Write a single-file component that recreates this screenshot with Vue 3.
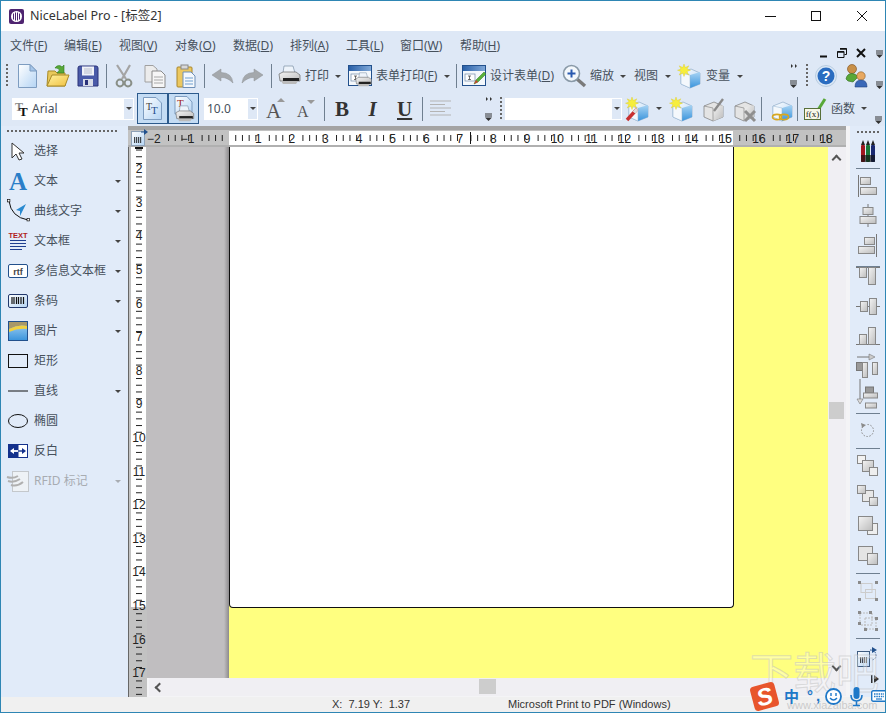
<script setup>
// every row keeps its reference x/y, margins are worked out from those
function flowX(items, start) {
  let pos = start
  return items.map((it) => {
    const ml = it.x - pos
    pos = it.x + it.w
    return { ...it, ml }
  })
}

const cube = `<path d="M3 9L13 5L22 9V20L12 24L3 20Z" fill="url(#gPage)" stroke="#7fa0c0" stroke-width=".6"/><path d="M12 11L22 8V20L12 24Z" fill="url(#gBlue)"/><path d="M3 9L12 11V24L3 20Z" fill="#f4f8fc" stroke="#8fb0d0" stroke-width=".5"/>`
const star = `<path d="M6 0L7.3 3.6L10.8 1.8L9 5L12.5 6.2L9 7.5L10.8 11L7.3 9L6 12.5L4.7 9L1.2 11L3 7.5L-.5 6.2L3 5L1.2 1.8L4.7 3.6Z" fill="#f6ee3c" stroke="#d8c830" stroke-width=".4"/>`
const greyCube = `<path d="M3 9L13 5L22 9V20L12 24L3 20Z" fill="#e4e4e4" stroke="#7a7a7a" stroke-width=".7"/><path d="M12 11L22 8V20L12 24Z" fill="url(#gGrey)"/><path d="M3 9L12 11V24" fill="none" stroke="#8a8a8a" stroke-width=".7"/>`
const formWin = `<rect x=".5" y=".5" width="23" height="20" fill="#f4f8fc" stroke="#22508c"/><rect x="1" y="1" width="22" height="5" fill="url(#gTitle)"/><rect x="3" y="9" width="10" height="7" fill="#fff" stroke="#6f8aa8" stroke-width=".7"/><path d="M6 11H9M7.5 11V14.5M6 14.5H9" stroke="#333" stroke-width=".7" fill="none"/>`
const printerSmall = `<path d="M6 1H15L17 8H5Z" fill="#eef4fb" stroke="#7b8fa5" stroke-width=".7"/><path d="M1 9L5 7H18L22 10V16H2Z" fill="url(#gGrey)" stroke="#666" stroke-width=".7"/><rect x="5" y="13" width="16" height="3" fill="#222"/><path d="M3 16H20L18 19H5Z" fill="#bbb"/>`

const I = {
  new: [20, 24, `<path d="M1.5 .5H13L19.5 7V23.5H1.5Z" fill="url(#gPage)" stroke="#7d9cc0"/><path d="M13 .5V7H19.5Z" fill="#a6c6ea" stroke="#7d9cc0"/>`],
  open: [24, 24, `<path d="M1 22L2 7H9L11 9H19V22Z" fill="#e8c85a" stroke="#a88a28"/><path d="M1 22L6 11H23L19 22Z" fill="url(#gYellow)" stroke="#a88a28"/><path d="M9 4C11 1 14 1 16 3L18 1V9H11L13.5 6C12.5 4.5 11 4 9 4Z" fill="#58a838" stroke="#2f7a20" stroke-width=".6"/>`],
  save: [22, 22, `<path d="M1 3Q1 1 3 1H19Q21 1 21 3V21H1Z" fill="#4a5aa8" stroke="#2a3278"/><rect x="5" y="1.5" width="12" height="9" fill="#f0f2f8"/><path d="M7 4H15M7 6H15M7 8H15" stroke="#b8bccc"/><rect x="6" y="14" width="10" height="7" fill="#d8dce8"/><rect x="8" y="15" width="3" height="5" fill="#2a3278"/>`],
  cut: [18, 24, `<path d="M2 1L11 15M15 1L7 15" stroke="#a4a4a4" stroke-width="2.2" fill="none"/><circle cx="5" cy="19" r="3.4" fill="none" stroke="#8a9088" stroke-width="2"/><circle cx="13" cy="19" r="3.4" fill="none" stroke="#8a9088" stroke-width="2"/>`],
  copy: [22, 23, `<path d="M1 .5H9L13 4V17H1Z" fill="#ececec" stroke="#a0a0a0"/><path d="M8 6H17L21 10V22.5H8Z" fill="#f6f6f6" stroke="#8a8a8a"/><path d="M10 12H19M10 15H19M10 18H19" stroke="#a8a8a8"/>`],
  paste: [20, 24, `<rect x="1" y="3" width="15" height="20" rx="1" fill="#ecc860" stroke="#a8862c"/><rect x="5" y="1" width="7" height="4" fill="#d8d8d8" stroke="#888"/><path d="M7 8H15L19 12V23.5H7Z" fill="#f4f8fc" stroke="#6f90b8"/><path d="M9 14H17M9 17H17M9 20H17" stroke="#6f9fd0"/>`],
  undo: [21, 14, `<path d="M9 0L0 6L9 12V8.500Q15 8 21 14Q20 3.500 9 3.500Z" fill="#a4a8ac" stroke="#8c9094" stroke-width=".5"/>`],
  redo: [21, 14, `<path d="M12 0L21 6L12 12V8.500Q6 8 0 14Q1 3.500 12 3.500Z" fill="#a4a8ac" stroke="#8c9094" stroke-width=".5"/>`],
  print: [24, 22, printerSmall],
  formprint: [24, 22, `${formWin}<g transform="translate(7 7) scale(.75)">${printerSmall}</g>`],
  design: [24, 22, `${formWin}<path d="M12 19L14 15L22 7L24 9L16 17Z" fill="#58b038" stroke="#2f7a20" stroke-width=".5"/><path d="M12 19L14 15L16 17Z" fill="#c84030"/>`],
  zoom: [24, 24, `<path d="M15 15L23 22" stroke="#7a7a7a" stroke-width="3.4"/><circle cx="9.5" cy="9.5" r="8" fill="#f4f8fc" stroke="#8a9aa8" stroke-width="1.6"/><path d="M5.5 9.5H13.5M9.5 5.5V13.5" stroke="#2a5ab0" stroke-width="2"/>`],
  vars: [24, 24, `${cube}${star}`],
  help: [22, 22, `<circle cx="11" cy="11" r="10.5" fill="#dbe8f6" stroke="#b8cce0"/><circle cx="11" cy="11" r="8.5" fill="#2a6cc0"/><text x="11" y="16" text-anchor="middle" font-family="Liberation Sans" font-weight="700" font-size="14" fill="#fff">?</text>`],
  users: [24, 24, `<circle cx="7" cy="5" r="4.5" fill="#c89048" stroke="#7a4a18" stroke-width=".6"/><path d="M1 15Q2 9.500 7 9.500Q11 9.500 13 13L8 18L3 17Z" fill="#58a838" stroke="#2f6a20" stroke-width=".6"/><circle cx="16" cy="12" r="4.2" fill="#e8a860" stroke="#8a5a20" stroke-width=".6"/><path d="M10 23Q10 16 16 16Q22 16 22 23Z" fill="#3a68b8" stroke="#1f3f80" stroke-width=".6"/>`],
  tt: [14, 16, `<text x="0" y="10" font-family="Liberation Serif" font-weight="700" font-size="12" fill="#888">T</text><text x="4" y="15" font-family="Liberation Serif" font-weight="700" font-size="13" fill="#111">T</text>`],
  ttBtn: [19, 23, `<path d="M.5 .5H13L18.5 6V22.5H.5Z" fill="url(#gPage)" stroke="#7d9cc0"/><text x="3" y="13" font-family="Liberation Serif" font-size="10" fill="#444">T</text><text x="8" y="17" font-family="Liberation Serif" font-size="11" fill="#1f4f90">T</text>`],
  ttPrint: [24, 25, `<path d="M3 .5H15L20 6V18H3Z" fill="url(#gPage)" stroke="#7d9cc0"/><text x="5" y="11" font-family="Liberation Serif" font-size="11" fill="#a02020">T</text><g transform="translate(3 9) scale(.85)">${printerSmall}</g>`],
  aUp: [20, 21, `<text x="0" y="20" font-family="Liberation Serif" font-size="21" fill="#555">A</text><path d="M11 4L15 0L19 4Z" fill="#999"/>`],
  aDown: [20, 18, `<text x="0" y="17" font-family="Liberation Serif" font-size="16" fill="#555">A</text><path d="M10 0H18L14 4Z" fill="#999"/>`],
  align: [21, 18, `<path d="M0 1H21M0 4.5H15M0 8H21M0 11.5H15M0 15H21" stroke="#b4b4b4" stroke-width="1.2"/>`],
  wand: [24, 24, `${cube}${star}<path d="M1 23L11 12" stroke="#c83030" stroke-width="3.4"/><path d="M8 15.5L11 12" stroke="#ddd" stroke-width="3.4"/>`],
  cubeNew: [24, 24, `${cube}${star}`],
  greyPen: [24, 24, `${greyCube}<path d="M13 14L22 2" stroke="#8a8a8a" stroke-width="2.4"/>`],
  greyX: [24, 24, `${greyCube}<path d="M13 14L23 24M23 14L13 24" stroke="#8f8f8f" stroke-width="3"/>`],
  cubeLink: [21, 24, `${cube}<ellipse cx="7" cy="20" rx="4.5" ry="2.6" fill="none" stroke="#d8a820" stroke-width="1.6"/><ellipse cx="14" cy="20" rx="4.5" ry="2.6" fill="none" stroke="#d8a820" stroke-width="1.6"/>`],
  fx: [22, 22, `<path d="M14 12L21 1" stroke="#58a838" stroke-width="3"/><path d="M12 14L14 12" stroke="#c84030" stroke-width="3"/><rect x=".5" y="10.5" width="16" height="11" fill="#f8f8e8" stroke="#58703a"/><text x="8.5" y="19" text-anchor="middle" font-family="Liberation Serif" font-size="9" fill="#222">f(x)</text>`],
  select: [14, 19, `<path d="M1 1V16L5 12L8 18L11 17L8 11L13 11Z" fill="#fff" stroke="#333" stroke-width="1"/>`],
  textA: [20, 18, `<text x="10" y="17.500" text-anchor="middle" font-family="Liberation Serif" font-weight="700" font-size="25" fill="#2a7ec8">A</text>`],
  curve: [23, 24, `<path d="M2 2Q4 18 21 21" fill="none" stroke="#111" stroke-width="1"/><rect x=".5" y=".5" width="2.4" height="2.4" fill="#fff" stroke="#111" stroke-width=".7"/><rect x="20" y="19.5" width="2.4" height="2.4" fill="#fff" stroke="#111" stroke-width=".7"/><path d="M19 5L9 11L13 12L13 17Z" fill="#2a8ad0"/>`],
  textbox: [18, 20, `<text x="9" y="7" text-anchor="middle" font-family="Liberation Sans" font-weight="700" font-size="7.5" fill="#b02020">TEXT</text><path d="M1 9.5H17M1 12.5H17M1 15.5H17M1 18.5H13" stroke="#1f3f90" stroke-width="1.2"/>`],
  rtf: [20, 14, `<rect x=".5" y=".5" width="19" height="13" rx="1.5" fill="#fff" stroke="#22508c"/><text x="10" y="10.5" text-anchor="middle" font-family="Liberation Sans" font-weight="700" font-size="9" fill="#444">rtf</text>`],
  barcode: [20, 14, `<rect x=".5" y=".5" width="19" height="13" rx="1.5" fill="url(#gPage)" stroke="#22386c"/><path d="M4 3V10M6 3V10M8.5 3V10M10.5 3V10M13 3V10M15.5 3V10" stroke="#111" stroke-width="1.2"/>`],
  picture: [20, 20, `<rect x=".5" y=".5" width="19" height="19" fill="url(#gBlue)" stroke="#22508c"/><path d="M1 1H19V5Q10 3 1 8Z" fill="#a89868"/><path d="M1 8Q10 3 19 5V8Q10 7 1 11Z" fill="#f0d040"/>`],
  rect: [20, 14, `<rect x=".5" y=".5" width="19" height="13" fill="none" stroke="#111"/>`],
  line: [20, 2, `<path d="M0 1H20" stroke="#111"/>`],
  ellipse: [20, 14, `<ellipse cx="10" cy="7" rx="9.5" ry="6.5" fill="none" stroke="#111"/>`],
  invert: [20, 14, `<rect width="10" height="14" fill="#14318c"/><rect x="10" y=".5" width="9.5" height="13" fill="#fff" stroke="#14318c"/><path d="M3 7H16" stroke="#fff" stroke-width="1.4"/><path d="M3 7H10" stroke="#fff" stroke-width="1.4"/><path d="M2 7L6 4V10Z" fill="#fff"/><path d="M18 7L14 4V10Z" fill="#14318c"/><path d="M10 7H15" stroke="#14318c" stroke-width="1.4"/>`],
  rfid: [22, 21, `<rect x="5.5" y=".5" width="16" height="20" fill="#eef2f6" stroke="#c4c8cc"/><path d="M0 6Q6 8 11 5M1 10Q7 12 13 8M4 14Q10 16 16 11" fill="none" stroke="#b0b0b0" stroke-width="2"/>`],
  pens: [14, 22, `<rect x="0" y="5" width="4" height="17" rx="1" fill="#a01820"/><rect x="5" y="5" width="4" height="17" rx="1" fill="#187838"/><rect x="10" y="5" width="4" height="17" rx="1" fill="#182870"/><path d="M0 5L2 0L4 5M5 5L7 0L9 5M10 5L12 0L14 5" fill="#222"/><path d="M0 15H14V22H0Z" fill="#111" opacity=".65"/>`],
  alignL: [19, 22, `<path d="M.5 0V22" stroke="#777"/><rect x="2.5" y="2.5" width="10" height="7" fill="url(#gGrey)" stroke="#888"/><rect x="2.5" y="12.5" width="16" height="7" fill="url(#gGrey)" stroke="#888"/>`],
  alignC: [18, 23, `<path d="M9 0V23" stroke="#777"/><rect x="4" y="3.5" width="10" height="7" fill="url(#gGrey)" stroke="#888"/><rect x="1" y="12.5" width="16" height="7" fill="url(#gGrey)" stroke="#888"/>`],
  alignR: [19, 23, `<path d="M18.5 0V23" stroke="#777"/><rect x="6.5" y="3.5" width="10" height="7" fill="url(#gGrey)" stroke="#888"/><rect x=".5" y="12.5" width="16" height="7" fill="url(#gGrey)" stroke="#888"/>`],
  alignT: [24, 18, `<path d="M0 .5H24" stroke="#777"/><rect x="3.500" y=".5" width="7" height="10" fill="url(#gGrey)" stroke="#888"/><rect x="12.500" y=".5" width="7" height="17" fill="url(#gGrey)" stroke="#888"/>`],
  alignM: [24, 17, `<path d="M0 8.5H24" stroke="#777"/><rect x="4.5" y="3.5" width="7" height="10" fill="url(#gGrey)" stroke="#888"/><rect x="13.5" y=".5" width="7" height="16" fill="url(#gGrey)" stroke="#888"/>`],
  alignB: [24, 18, `<path d="M0 17.5H24" stroke="#777"/><rect x="3.5" y="7.5" width="7" height="10" fill="url(#gGrey)" stroke="#888"/><rect x="12.5" y=".5" width="7" height="17" fill="url(#gGrey)" stroke="#888"/>`],
  distH: [23, 24, `<path d="M1 3H17" stroke="#777"/><path d="M13 0L19 3L13 6Z" fill="#ccc" stroke="#777" stroke-width=".6"/><rect x=".5" y="8.5" width="6" height="8" fill="#999" stroke="#777"/><rect x="6.5" y="8.5" width="5" height="15" fill="url(#gGrey)" stroke="#888"/><rect x="16.5" y="8.5" width="5" height="12" fill="url(#gGrey)" stroke="#888"/>`],
  distV: [21, 30, `<path d="M3 1V25" stroke="#777"/><path d="M0 21L3 26L6 21Z" fill="#ddd" stroke="#777" stroke-width=".6"/><rect x="8.5" y="9" width="8" height="6" fill="#999" stroke="#777"/><rect x="6.5" y="15" width="14" height="5" fill="url(#gGrey)" stroke="#888"/><rect x="8.5" y="25" width="11" height="5" fill="url(#gGrey)" stroke="#888"/>`],
  rotate: [15, 15, `<path d="M7.5 1.500A6 6 0 1 1 1.500 7.500A6 6 0 0 1 3 3.500" fill="none" stroke="#8a8a8a" stroke-width="1" stroke-dasharray="1.500 1.500"/><path d="M1 0L6 2L2 5Z" fill="#8a8a8a"/>`],
  lay1: [21, 21, `<rect x=".5" y=".5" width="8" height="8" fill="#f2f2f2" stroke="#888"/><rect x="5.5" y="5.5" width="11" height="11" fill="url(#gGrey)" stroke="#888"/><rect x="12.5" y="12.5" width="8" height="8" fill="#eee" stroke="#888"/>`],
  lay2: [21, 21, `<rect x="5.5" y="5.5" width="11" height="11" fill="#e8e8e8" stroke="#888"/><rect x=".5" y=".5" width="8" height="8" fill="url(#gGrey)" stroke="#888"/><rect x="12.5" y="12.5" width="8" height="8" fill="url(#gGrey)" stroke="#888"/>`],
  lay3: [20, 19, `<rect x="9.5" y="7.5" width="10" height="11" fill="#eee" stroke="#888"/><rect x=".5" y=".5" width="14" height="14" fill="url(#gGrey)" stroke="#888"/>`],
  lay4: [20, 19, `<rect x=".5" y=".5" width="14" height="14" fill="#e4e4e4" stroke="#888"/><rect x="9.5" y="7.5" width="10" height="11" fill="url(#gGrey)" stroke="#888"/>`],
  grp: [20, 20, `<rect x="3" y="2.5" width="11" height="9" fill="none" stroke="#ccc"/><rect x="7.5" y="8.5" width="10" height="9" fill="none" stroke="#ccc"/><path d="M0 0H3V3H0ZM17 0H20V3H17ZM0 17H3V20H0ZM17 17H20V20H17Z" fill="#8a8a8a"/>`],
  ungrp: [20, 20, `<rect x="2" y="2" width="12" height="12" fill="none" stroke="#bbb" stroke-dasharray="2 1"/><rect x="7" y="7" width="11" height="11" fill="none" stroke="#bbb" stroke-dasharray="2 1"/><path d="M0 0H3V3H0ZM11 0H14V3H11ZM17 6H20V9H17ZM0 11H3V14H0ZM6 17H9V20H6ZM17 17H20V20H17Z" fill="#8a8a8a"/>`],
  grid: [21, 20, `<rect x=".5" y="4.5" width="12" height="15" fill="url(#gPage)" stroke="#3f5c80"/><path d="M3 11H10M3 13H10M3 15H10" stroke="#111" stroke-dasharray="1.2 .8" stroke-width="1.4"/><path d="M13 3Q19 3 19 9Q19 12 15 13" fill="none" stroke="#22508c" stroke-dasharray="1.5 1.2"/><path d="M15 0L20 3L15 6Z" fill="#22508c"/>`],
  corner: [17, 17, `<rect x=".5" y="2.500" width="13" height="14" fill="url(#gPage)" stroke="#8fa2b8"/><path d="M3 9H11M3 11H11M3 13H11" stroke="#111" stroke-dasharray="1.2 .8" stroke-width="1.4"/><path d="M10 3H15" stroke="#22508c"/><path d="M13 0L17 3L13 6Z" fill="#22508c"/>`],
  over: [9, 24, `<path d="M2 0L4 2L2 4ZM6 0L8 2L6 4Z" fill="#333"/><path d="M1 17H8M1 19H8" stroke="#333"/><path d="M1 20.5H8L4.5 24Z" fill="#333"/>`],
  overLow: [9, 8, `<path d="M1 1H8M1 3H8" stroke="#333"/><path d="M1 4.5H8L4.5 8Z" fill="#333"/>`],
  logo: [15, 15, `<rect width="15" height="15" rx="2" fill="#4e2470"/><circle cx="7.5" cy="7.5" r="5.5" fill="#fff"/><path d="M4.500 4.500V10.500M6.500 3.500V11.500M8.500 3.500V11.500M10.500 4.500V10.500" stroke="#4e2470"/>`],
  smile: [17, 17, `<circle cx="8.5" cy="8.5" r="7.5" fill="#fff" stroke="#1e78c8" stroke-width="1.8"/><path d="M5 10Q8.5 14 12 10" fill="none" stroke="#1e78c8" stroke-width="1.4"/><path d="M6 5V8M11 5V8" stroke="#1e78c8" stroke-width="1.4"/>`],
  mic: [13, 19, `<rect x="3.5" y="0" width="6" height="12" rx="3" fill="#1e78c8"/><path d="M1 8Q1 14 6.500 14Q12 14 12 8M6.500 14V18M3 18.500H10" fill="none" stroke="#1e78c8" stroke-width="1.6"/>`],
  keys: [16, 12, `<rect x=".7" y=".7" width="14.600" height="10.600" rx="1.500" fill="#fff" stroke="#1e78c8" stroke-width="1.400"/><path d="M3 4H13M3 6.500H13" stroke="#1e78c8" stroke-width="1.400" stroke-dasharray="1.500 .8"/><path d="M5 9H11" stroke="#1e78c8" stroke-width="1.200"/>`],
}

function icon(name) {
  const [w, h] = I[name]
  return { width: w, height: h, viewBox: `0 0 ${w} ${h}` }
}
function art(name) {
  return I[name][2]
}

const menus = flowX([
  { x: 10, w: 40, t: '文件(', k: 'F' }, { x: 64, w: 40, t: '编辑(', k: 'E' },
  { x: 119, w: 40, t: '视图(', k: 'V' }, { x: 175, w: 42, t: '对象(', k: 'O' },
  { x: 233, w: 42, t: '数据(', k: 'D' }, { x: 290, w: 42, t: '排列(', k: 'A' },
  { x: 346, w: 40, t: '工具(', k: 'L' }, { x: 400, w: 46, t: '窗口(', k: 'W' },
  { x: 460, w: 42, t: '帮助(', k: 'H' },
], 1)

const row1 = flowX([
  { x: 6, w: 2, grip: 1 },
  { x: 17, w: 20, ic: 'new' }, { x: 46, w: 24, ic: 'open' }, { x: 77, w: 22, ic: 'save' },
  { x: 106, w: 1, sep: 1 },
  { x: 115, w: 18, ic: 'cut' }, { x: 144, w: 22, ic: 'copy' }, { x: 176, w: 20, ic: 'paste' },
  { x: 204, w: 1, sep: 1 },
  { x: 212, w: 21, ic: 'undo' }, { x: 242, w: 21, ic: 'redo' },
  { x: 271, w: 1, sep: 1 },
  { x: 278, w: 24, ic: 'print' }, { x: 305, w: 26, t: '打印' }, { x: 335, w: 6, drop: 1 },
  { x: 348, w: 24, ic: 'formprint' }, { x: 376, w: 62, t: '表单打印(', k: 'F' }, { x: 444, w: 6, drop: 1 },
  { x: 456, w: 1, sep: 1 },
  { x: 462, w: 24, ic: 'design' }, { x: 490, w: 66, t: '设计表单(', k: 'D' },
  { x: 562, w: 24, ic: 'zoom' }, { x: 590, w: 26, t: '缩放' }, { x: 620, w: 6, drop: 1 },
  { x: 634, w: 26, t: '视图' }, { x: 665, w: 6, drop: 1 },
  { x: 678, w: 24, ic: 'vars' }, { x: 706, w: 26, t: '变量' }, { x: 737, w: 6, drop: 1 },
  { x: 789, w: 9, ic: 'over' }, { x: 806, w: 2, grip: 1 },
  { x: 815, w: 22, ic: 'help' }, { x: 845, w: 24, ic: 'users' },
  { x: 875, w: 9, ic: 'overLow', low: 1 },
], 1)

const row2 = flowX([
  { x: 267, w: 20, ic: 'aUp' }, { x: 298, w: 20, ic: 'aDown' },
  { x: 325, w: 1, sep: 1 },
  { x: 335, w: 16, bold: 'B' }, { x: 366, w: 15, ital: 'I' }, { x: 398, w: 15, und: 'U' },
  { x: 423, w: 1, sep: 1 },
  { x: 431, w: 21, ic: 'align' }, { x: 485, w: 9, ic: 'over' }, { x: 501, w: 2, grip: 1 },
  { x: 506, w: 117, combo: 1 },
  { x: 627, w: 24, ic: 'wand' }, { x: 657, w: 6, drop: 1 },
  { x: 671, w: 24, ic: 'cubeNew' }, { x: 702, w: 24, ic: 'greyPen' }, { x: 733, w: 24, ic: 'greyX' },
  { x: 762, w: 1, sep: 1 },
  { x: 771, w: 21, ic: 'cubeLink' },
  { x: 798, w: 1, sep: 1 },
  { x: 805, w: 22, ic: 'fx' }, { x: 832, w: 26, t: '函数' }, { x: 862, w: 6, drop: 1 },
  { x: 875, w: 9, ic: 'overLow', low: 1 },
], 259)

const tools = [
  { ic: 'select', t: '选择' }, { ic: 'textA', t: '文本', more: 1 }, { ic: 'curve', t: '曲线文字', more: 1 },
  { ic: 'textbox', t: '文本框', more: 1 }, { ic: 'rtf', t: '多信息文本框', more: 1 }, { ic: 'barcode', t: '条码', more: 1 },
  { ic: 'picture', t: '图片', more: 1 }, { ic: 'rect', t: '矩形' }, { ic: 'line', t: '直线', more: 1 },
  { ic: 'ellipse', t: '椭圆' }, { ic: 'invert', t: '反白' }, { ic: 'rfid', t: 'RFID 标记', more: 1, off: 1 },
]

// right palette, y positions read from the reference
let ry = 126
const side = [
  { y: 131, h: 2, dots: 1 }, { y: 140, h: 22, ic: 'pens' }, { y: 168, h: 1, sep: 1 },
  { y: 175, h: 22, ic: 'alignL' }, { y: 204, h: 23, ic: 'alignC' }, { y: 234, h: 23, ic: 'alignR' },
  { y: 266, h: 1, sep: 1 }, { y: 267, h: 18, ic: 'alignT' }, { y: 298, h: 17, ic: 'alignM' },
  { y: 327, h: 18, ic: 'alignB' }, { y: 354, h: 24, ic: 'distH' }, { y: 378, h: 30, ic: 'distV' },
  { y: 413, h: 1, sep: 1 }, { y: 423, h: 15, ic: 'rotate' }, { y: 448, h: 1, sep: 1 },
  { y: 455, h: 21, ic: 'lay1' }, { y: 485, h: 21, ic: 'lay2' }, { y: 516, h: 19, ic: 'lay3' },
  { y: 546, h: 19, ic: 'lay4' }, { y: 573, h: 1, sep: 1 }, { y: 581, h: 20, ic: 'grp' },
  { y: 611, h: 20, ic: 'ungrp' }, { y: 638, h: 1, sep: 1 }, { y: 647, h: 20, ic: 'grid' },
].map((it) => {
  const mt = it.y - ry
  ry = it.y + it.h
  return { ...it, mt }
})

// rulers: 15 cm ends at the page's right edge (x=733) and bottom edge (y=607)
const CM = 33.6
const hTicks = []
const hNums = []
for (let i = -10; i <= 90; i++) {
  const x = 229 + (i * CM) / 5
  if (x < 150 || x > 842) continue
  if (i % 5 === 0) {
    if (i !== 0) hNums.push({ x: x - 1, n: Math.abs(i / 5), minus: i < 0 })
  } else hTicks.push(x)
}
const vTicks = []
const vNums = []
for (let i = 0; i <= 90; i++) {
  const y = 607 - ((75 - i) * CM) / 5
  if (y < 150 || y > 697) continue
  if (i % 5 === 0) vNums.push({ y, n: i / 5 })
  else vTicks.push(y)
}
</script>

<template>
  <div class="win">
    <svg class="defs" width="0" height="0">
      <defs>
        <linearGradient id="gPage" x1="0" y1="0" x2="1" y2="1"><stop offset="0" stop-color="#fff" /><stop offset="1" stop-color="#b4d4f4" /></linearGradient>
        <linearGradient id="gBlue" x1="0" y1="0" x2="0" y2="1"><stop offset="0" stop-color="#a8d4f4" /><stop offset="1" stop-color="#3a94dc" /></linearGradient>
        <linearGradient id="gGrey" x1="0" y1="0" x2="1" y2="1"><stop offset="0" stop-color="#f4f4f4" /><stop offset="1" stop-color="#bcbcbc" /></linearGradient>
        <linearGradient id="gYellow" x1="0" y1="0" x2="1" y2="1"><stop offset="0" stop-color="#fff2a0" /><stop offset="1" stop-color="#f0c040" /></linearGradient>
        <linearGradient id="gTitle" x1="0" y1="0" x2="1" y2="0"><stop offset="0" stop-color="#2a60a8" /><stop offset="1" stop-color="#7fa8d8" /></linearGradient>
      </defs>
    </svg>

    <header class="title">
      <svg class="logo" v-bind="icon('logo')" v-html="art('logo')"></svg>
      <span class="title-text">NiceLabel Pro - [标签2]</span>
      <div class="caption">
        <svg width="12" height="12" viewBox="0 0 12 12"><path d="M1 6.500H12" stroke="#111" /></svg>
        <svg width="12" height="12" viewBox="0 0 12 12"><rect x="1.500" y="1.500" width="9" height="9" fill="none" stroke="#111" /></svg>
        <svg width="12" height="12" viewBox="0 0 12 12"><path d="M1 1L11 11M11 1L1 11" stroke="#111" /></svg>
      </div>
    </header>

    <nav class="menu">
      <span v-for="m in menus" :key="m.t" class="item" :style="{ marginLeft: m.ml + 'px', width: m.w + 'px' }">{{ m.t }}<u>{{ m.k }}</u>)</span>
      <div class="mdi">
        <svg width="8" height="8" viewBox="0 0 8 8"><path d="M0 6.500H7" stroke="#111" stroke-width="2" /></svg>
        <svg width="10" height="10" viewBox="0 0 10 10"><path d="M3 .5H9.500V6.500H7.500M.5 3.500H7V9.500H.5Z" fill="none" stroke="#111" /><path d="M3 1H9.500M.5 4H7" stroke="#111" stroke-width="1.500" /></svg>
        <svg width="10" height="10" viewBox="0 0 10 10"><path d="M1 1L9 9M9 1L1 9" stroke="#111" stroke-width="2" /></svg>
        <svg v-bind="icon('overLow')" v-html="art('overLow')"></svg>
      </div>
    </nav>

    <div class="bar">
      <template v-for="(b, i) in row1" :key="i">
        <span v-if="b.grip" class="grip" :style="{ marginLeft: b.ml + 'px' }"></span>
        <span v-else-if="b.sep" class="sep" :style="{ marginLeft: b.ml + 'px' }"></span>
        <span v-else-if="b.drop" class="drop" :style="{ marginLeft: b.ml + 'px' }"></span>
        <span v-else-if="b.t" class="item" :style="{ marginLeft: b.ml + 'px', width: b.w + 'px' }">{{ b.t }}<template v-if="b.k"><u>{{ b.k }}</u>)</template></span>
        <svg v-else :class="{ low: b.low }" :style="{ marginLeft: b.ml + 'px' }" v-bind="icon(b.ic)" v-html="art(b.ic)"></svg>
      </template>
    </div>

    <div class="bar bar2">
      <div class="combo font-combo">
        <svg class="tt" v-bind="icon('tt')" v-html="art('tt')"></svg>
        <span class="combo-text">Arial</span>
        <span class="combo-arrow"><span class="drop"></span></span>
      </div>
      <button class="toggle first"><svg v-bind="icon('ttBtn')" v-html="art('ttBtn')"></svg></button>
      <button class="toggle"><svg v-bind="icon('ttPrint')" v-html="art('ttPrint')"></svg></button>
      <div class="combo size-combo">
        <span class="combo-text size-text">10.0</span>
        <span class="combo-arrow"><span class="drop"></span></span>
      </div>
      <template v-for="(b, i) in row2" :key="i">
        <span v-if="b.grip" class="grip" :style="{ marginLeft: b.ml + 'px' }"></span>
        <span v-else-if="b.sep" class="sep" :style="{ marginLeft: b.ml + 'px' }"></span>
        <span v-else-if="b.drop" class="drop" :style="{ marginLeft: b.ml + 'px' }"></span>
        <span v-else-if="b.t" class="item" :style="{ marginLeft: b.ml + 'px', width: b.w + 'px' }">{{ b.t }}</span>
        <span v-else-if="b.bold" class="glyph g-b" :style="{ marginLeft: b.ml + 'px', width: b.w + 'px' }">{{ b.bold }}</span>
        <span v-else-if="b.ital" class="glyph g-i" :style="{ marginLeft: b.ml + 'px', width: b.w + 'px' }">{{ b.ital }}</span>
        <span v-else-if="b.und" class="glyph g-u" :style="{ marginLeft: b.ml + 'px', width: b.w + 'px' }">{{ b.und }}</span>
        <div v-else-if="b.combo" class="combo name-combo" :style="{ marginLeft: b.ml + 'px', width: b.w + 'px' }">
          <span class="combo-arrow"><span class="drop"></span></span>
        </div>
        <svg v-else :class="{ low: b.low }" :style="{ marginLeft: b.ml + 'px' }" v-bind="icon(b.ic)" v-html="art(b.ic)"></svg>
      </template>
    </div>

    <main class="body">
      <aside class="palette">
        <div class="dots"></div>
        <div v-for="t in tools" :key="t.t" class="tool" :class="{ off: t.off }">
          <span class="tool-ic"><svg v-bind="icon(t.ic)" v-html="art(t.ic)"></svg></span>
          <span class="tool-text">{{ t.t }}</span>
          <span v-if="t.more" class="drop"></span>
        </div>
      </aside>

      <section class="center">
        <svg class="hruler" width="718" height="21" viewBox="128 126 718 21">
          <rect x="128" y="126" width="718" height="4" fill="#a4a4a4" />
          <rect x="128" y="130" width="718" height="15" fill="#c2c2c2" />
          <rect x="229" y="131" width="504" height="14" fill="#fff" />
          <rect x="128" y="145" width="718" height="2" fill="#b0b0b0" />
          <path v-for="x in hTicks" :key="x" :d="`M${x} 135V141`" stroke="#222" />
          <path d="M470.500 132V144" stroke="#111" />
          <text v-for="h in hNums" :key="h.x" :x="h.x" y="143" text-anchor="end" class="rnum">{{ h.minus ? '−' : '' }}{{ h.n }}</text>
        </svg>
        <svg class="corner" v-bind="icon('corner')" v-html="art('corner')"></svg>

        <div class="mid">
          <svg class="vruler" width="19" height="550" viewBox="128 147 19 550">
            <rect x="128" y="147" width="19" height="550" fill="#c2c2c2" />
            <path d="M128.500 147V697" stroke="#666" />
            <rect x="131" y="147" width="15" height="460" fill="#fff" />
            <path d="M135 148H143" stroke="#111" stroke-width="2" />
            <path v-for="y in vTicks" :key="y" :d="`M136 ${y}H142`" stroke="#222" />
            <text v-for="v in vNums" :key="v.y" x="139" :y="v.y + 3" text-anchor="middle" class="rnum">{{ v.n }}</text>
          </svg>
          <div class="view">
            <div class="view-row">
              <div class="stage">
                <div class="gutter"></div>
                <div class="paper">
                  <div class="page"></div>
                </div>
              </div>
              <div class="vscroll">
                <span class="chev up"></span>
                <span class="thumb"></span>
                <span class="chev down"></span>
              </div>
            </div>
            <div class="hscroll">
              <span class="chev left"></span>
              <span class="thumb"></span>
            </div>
          </div>
        </div>
      </section>

      <aside class="side">
        <template v-for="(s, i) in side" :key="i">
          <span v-if="s.dots" class="side-dots" :style="{ marginTop: s.mt + 'px' }"></span>
          <span v-else-if="s.sep" class="side-sep" :style="{ marginTop: s.mt + 'px' }"></span>
          <svg v-else :style="{ marginTop: s.mt + 'px' }" v-bind="icon(s.ic)" v-html="art(s.ic)"></svg>
        </template>
        <svg class="side-more" width="8" height="8" viewBox="0 0 8 8"><path d="M0 0H1.500V8H0ZM3 0L8 4L3 8Z" fill="#333" /></svg>
      </aside>
    </main>

    <footer class="status">
      <span class="coords">X:&nbsp; 7.19 Y:&nbsp; 1.37</span>
      <span class="printer">Microsoft Print to PDF (Windows)</span>
    </footer>

    <!-- watermark and input method bar sit over the window -->
    <div class="mark">下载吧</div>
    <div class="mark-url">www.xiazaiba.com</div>
    <div class="ime">
      <span class="ime-s"><i>S</i></span>
      <span class="ime-zh">中</span>
      <span class="ime-p">°,</span>
      <svg v-bind="icon('smile')" v-html="art('smile')"></svg>
      <svg v-bind="icon('mic')" v-html="art('mic')"></svg>
      <svg v-bind="icon('keys')" v-html="art('keys')"></svg>
    </div>
  </div>
</template>

<style>
html, body {
  margin: 0;
  overflow: hidden;
  background: #fff;
}
</style>

<style scoped>
.win {
  position: relative;
  width: 886px;
  height: 713px;
  box-sizing: border-box;
  border: 1px solid #2e86b4;
  display: flex;
  flex-direction: column;
  overflow: hidden;
  background: #dee8f6;
  font: 12px/16px "Noto Sans", "Noto Sans CJK SC", sans-serif;
  color: #46505c;
}
.defs {
  position: absolute;
}
svg {
  flex: none;
  display: block;
  overflow: visible;
}

.title {
  height: 30px;
  flex: none;
  background: #fff;
  display: flex;
  align-items: center;
  color: #333;
}
.logo {
  margin-left: 8px;
}
.title-text {
  margin-left: 6px;
  font-size: 12.500px;
}
.caption {
  margin-left: auto;
  display: flex;
  gap: 34px;
  margin-right: 17px;
}

.menu {
  height: 30px;
  flex: none;
  display: flex;
  align-items: center;
  position: relative;
}
.item {
  flex: none;
  white-space: nowrap;
}
.mdi {
  margin-left: auto;
  display: flex;
  align-items: flex-end;
  gap: 9px;
  padding: 14px 1px 0 0;
}

.bar {
  height: 30px;
  flex: none;
  display: flex;
  align-items: center;
}
.bar2 {
  height: 35px;
  padding-left: 11px;
}
.grip {
  flex: none;
  width: 2px;
  height: 24px;
  background: repeating-linear-gradient(#666 0 2px, transparent 2px 4px);
}
.sep {
  flex: none;
  width: 1px;
  height: 24px;
  background: #6f7f90;
}
.drop {
  flex: none;
  width: 0;
  height: 0;
  border: 3px solid transparent;
  border-top: 3px solid #444;
  border-bottom: 0;
}
.low {
  align-self: flex-end;
  margin-bottom: 2px;
}

.combo {
  flex: none;
  height: 22px;
  background: #fff;
  display: flex;
  align-items: center;
  box-sizing: border-box;
}
.font-combo {
  width: 122px;
}
.tt {
  margin-left: 3px;
}
.combo-text {
  margin-left: 3px;
  font-size: 12px;
}
.size-text {
  margin-left: 3px;
}
.combo-arrow {
  margin-left: auto;
  width: 10px;
  height: 100%;
  background: #dee8f6;
  border: 1px solid #fff;
  border-left: 0;
  box-sizing: border-box;
  display: flex;
  align-items: center;
  justify-content: center;
}
.size-combo {
  width: 54px;
  margin-left: 5px;
}
.name-combo {
  height: 22px;
}
.toggle {
  flex: none;
  width: 31px;
  height: 31px;
  padding: 0;
  background: #c4dcf4;
  border: 1px solid #2c5a8c;
  display: flex;
  align-items: center;
  justify-content: center;
}
.toggle.first {
  margin-left: 3px;
}
.glyph {
  flex: none;
  text-align: center;
  color: #333;
  font-family: "Liberation Serif", serif;
  font-size: 21px;
  line-height: 24px;
}
.g-b {
  font-weight: 700;
}
.g-i {
  font-style: italic;
  font-weight: 700;
}
.g-u {
  font-weight: 700;
  text-decoration: underline;
}

.body {
  flex: 1;
  min-height: 0;
  display: flex;
}
.palette {
  width: 127px;
  flex: none;
  background: #e1ebf9;
}
.dots {
  margin: 4px 0 4px 6px;
  width: 111px;
  height: 2px;
  background: repeating-linear-gradient(90deg, #666 0 2px, transparent 2px 4px);
}
.tool {
  height: 30px;
  display: flex;
  align-items: center;
}
.tool-ic {
  width: 33px;
  display: flex;
  justify-content: center;
  padding-left: 1px;
  box-sizing: border-box;
}
.tool-text {
  flex: 1;
  white-space: nowrap;
}
.tool > .drop {
  margin-right: 7px;
}
.tool.off {
  color: #a8acb2;
}
.tool.off .drop {
  border-top-color: #a8acb2;
}

.center {
  width: 722px;
  flex: none;
  position: relative;
  display: flex;
  flex-direction: column;
  background: #f4f4f6;
}
.corner {
  position: absolute;
  left: 3px;
  top: 3px;
}
.mid {
  flex: 1;
  min-height: 0;
  display: flex;
  width: 718px;
}
.view {
  flex: 1;
  display: flex;
  flex-direction: column;
  min-width: 0;
}
.view-row {
  flex: 1;
  min-height: 0;
  display: flex;
}
.stage {
  flex: 1;
  display: flex;
  min-width: 0;
}
.gutter {
  width: 82px;
  flex: none;
  background: linear-gradient(90deg, #c0bec0 0 77px, #8d8b8d);
}
.paper {
  flex: 1;
  background: #ffff80;
}
.page {
  width: 503px;
  height: 460px;
  box-sizing: content-box;
  background: #fff;
  border: 1px solid #111;
  border-top: 0;
  border-radius: 0 0 4px 4px;
}
.vscroll {
  width: 18px;
  flex: none;
  background: #f0eff3;
  display: flex;
  flex-direction: column;
  align-items: center;
  position: relative;
}
.vscroll .thumb {
  position: absolute;
  left: 1px;
  top: 255px;
  width: 15px;
  height: 17px;
  background: #cdcdcd;
}
.hscroll {
  height: 18px;
  flex: none;
  margin-left: 2px;
  margin-bottom: 1px;
  background: #f0eff3;
  position: relative;
}
.hscroll .thumb {
  position: absolute;
  left: 330px;
  top: 1px;
  width: 17px;
  height: 15px;
  background: #cdcdcd;
}
.chev {
  position: absolute;
  width: 5px;
  height: 5px;
  border: 2px solid #555;
  border-width: 2px 0 0 2px;
}
.chev.up {
  top: 9px;
  left: 5px;
  transform: rotate(45deg);
}
.chev.down {
  bottom: 8px;
  left: 5px;
  transform: rotate(225deg);
}
.chev.left {
  top: 6px;
  left: 7px;
  transform: rotate(-45deg);
}
.rnum {
  font: 12px "Liberation Sans", sans-serif;
  fill: #222;
}

.side {
  flex: 1;
  background: #e1ebf9;
  display: flex;
  flex-direction: column;
  align-items: center;
}
.side-dots {
  width: 22px;
  height: 2px;
  background: repeating-linear-gradient(90deg, #666 0 2px, transparent 2px 4px);
}
.side-sep {
  width: 24px;
  height: 1px;
  background: #6f7f90;
}
.side-more {
  align-self: flex-end;
  margin: 8px 6px 0 0;
}

.status {
  height: 15px;
  flex: none;
  background: #f0f0f0;
  display: flex;
  align-items: center;
  font: 11px/15px "Liberation Sans", sans-serif;
  color: #333;
}
.coords {
  margin-left: 331px;
  width: 176px;
  white-space: nowrap;
}
.printer {
  white-space: nowrap;
}

.mark {
  position: absolute;
  left: 749px;
  top: 645px;
  font: 400 43px/48px "Noto Sans CJK SC", sans-serif;
  color: rgba(255, 255, 255, .3);
  -webkit-text-stroke: 1px rgba(190, 190, 190, .5);
  white-space: nowrap;
  pointer-events: none;
}
.mark-url {
  position: absolute;
  left: 786px;
  top: 698px;
  font: 11px/13px "Liberation Sans", sans-serif;
  color: rgba(170, 170, 170, .55);
  white-space: nowrap;
}
.ime {
  position: absolute;
  left: 749px;
  top: 680px;
  display: flex;
  align-items: center;
  height: 30px;
}
.ime-s {
  width: 25px;
  height: 25px;
  margin-left: 2px;
  background: #e8552c;
  border-radius: 4px;
  transform: rotate(-15deg);
  display: flex;
  align-items: center;
  justify-content: center;
  color: #fff;
  font: 700 24px/25px "Liberation Sans", sans-serif;
}
.ime-zh {
  margin-left: 7px;
  color: #1e78c8;
  font: 700 15px/20px "Noto Sans CJK SC", sans-serif;
}
.ime-p {
  margin-left: 8px;
  width: 18px;
  color: #1e78c8;
  font: 700 15px/20px "Liberation Sans", sans-serif;
  letter-spacing: 3px;
}
.ime svg:nth-of-type(2) {
  margin-left: 8px;
}
.ime svg:nth-of-type(3) {
  margin-left: 8px;
}
</style>
